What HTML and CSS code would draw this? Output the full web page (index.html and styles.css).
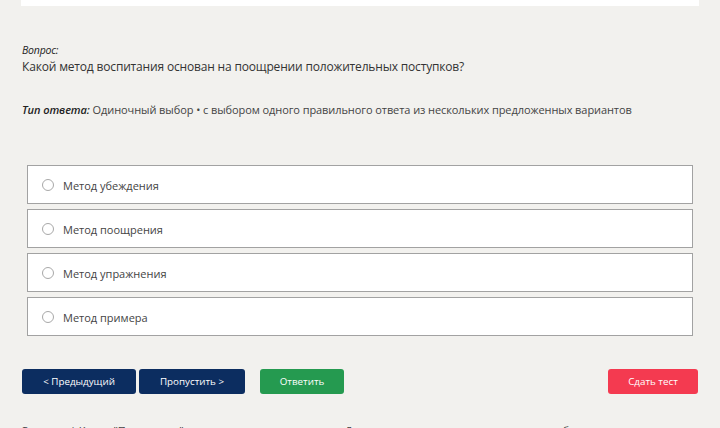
FILE: index.html
```html
<!DOCTYPE html>
<html lang="ru">
<head>
<meta charset="utf-8">
<title>Тест</title>
<link rel="stylesheet" href="styles.css">
</head>
<body>
<div class="page">
  <div class="top-card"></div>

  <div class="question">
    <div class="q-label">Вопрос:</div>
    <div class="q-text">Какой метод воспитания основан на поощрении положительных поступков?</div>
  </div>

  <div class="answer-type"><span class="at-label">Тип ответа:</span> Одиночный выбор • с выбором одного правильного ответа из нескольких предложенных вариантов</div>

  <div class="options">
    <label class="option"><span class="radio"></span><span>Метод убеждения</span></label>
    <label class="option"><span class="radio"></span><span>Метод поощрения</span></label>
    <label class="option"><span class="radio"></span><span>Метод упражнения</span></label>
    <label class="option"><span class="radio"></span><span>Метод примера</span></label>
  </div>

  <div class="actions">
    <div class="nav">
      <button class="btn btn-navy btn-prev">&lt; Предыдущий</button>
      <button class="btn btn-navy btn-skip">Пропустить &gt;</button>
      <button class="btn btn-green btn-answer">Ответить</button>
    </div>
    <button class="btn btn-red btn-finish">Сдать тест</button>
  </div>

  <div class="footnote">Задание | Ключ: "Педагогика", раздел: методы воспитания. Для перехода к следующему вопросу выберите ответ</div>
</div>
</body>
</html>
```

FILE: styles.css
```css
* { box-sizing: border-box; }

html, body {
  margin: 0;
  height: 100%;
  overflow: hidden;
}

body {
  background: #f2f1ee;
  font-family: "Open Sans", "Noto Sans", sans-serif;
  color: #333;
}

.page {
  padding: 0 22px;
}

.top-card {
  height: 6px;
  margin: 0 -1px;
  background: #fff;
}

.question {
  margin-top: 37px;
}

.q-label {
  font-size: 10.5px;
  font-style: italic;
  line-height: 15px;
  color: #222;
  letter-spacing: -0.2px;
}

.q-text {
  font-size: 12px;
  line-height: 18px;
  color: #333;
  letter-spacing: -0.17px;
}

.answer-type {
  margin-top: 26px;
  font-size: 11px;
  line-height: 16px;
  color: #444;
  letter-spacing: -0.08px;
}

.at-label {
  font-style: italic;
  font-weight: 600;
  color: #222;
}

.options {
  margin: 47px 5px 0;
  display: flex;
  flex-direction: column;
  gap: 5px;
}

.option {
  display: flex;
  align-items: center;
  height: 39px;
  padding-top: 1px;
  background: #fff;
  border: 1px solid #a2a2a2;
  padding-left: 14px;
  font-size: 11px;
  color: #444;
  gap: 9px;
}

.radio {
  width: 12px;
  height: 12px;
  border: 1px solid #a8a8a8;
  border-radius: 50%;
  background: #fff;
}

.actions {
  margin-top: 33px;
  display: flex;
  justify-content: space-between;
  align-items: center;
}

.nav {
  display: flex;
  gap: 3px;
}

.btn {
  height: 25px;
  border: 0;
  border-radius: 3px;
  color: #fff;
  font-family: "Open Sans", "Noto Sans", sans-serif;
  font-size: 9.8px;
  padding: 0;
}

.btn-navy { background: #0c2d60; }
.btn-green { background: #259a50; }
.btn-red { background: #f43a50; }

.btn-prev { width: 114px; }
.btn-skip { width: 106px; }
.btn-answer { width: 84px; margin-left: 12px; }
.btn-finish { width: 90px; }

.footnote {
  margin-top: 29px;
  font-size: 11px;
  line-height: 16px;
  color: #444;
  white-space: nowrap;
}
```
